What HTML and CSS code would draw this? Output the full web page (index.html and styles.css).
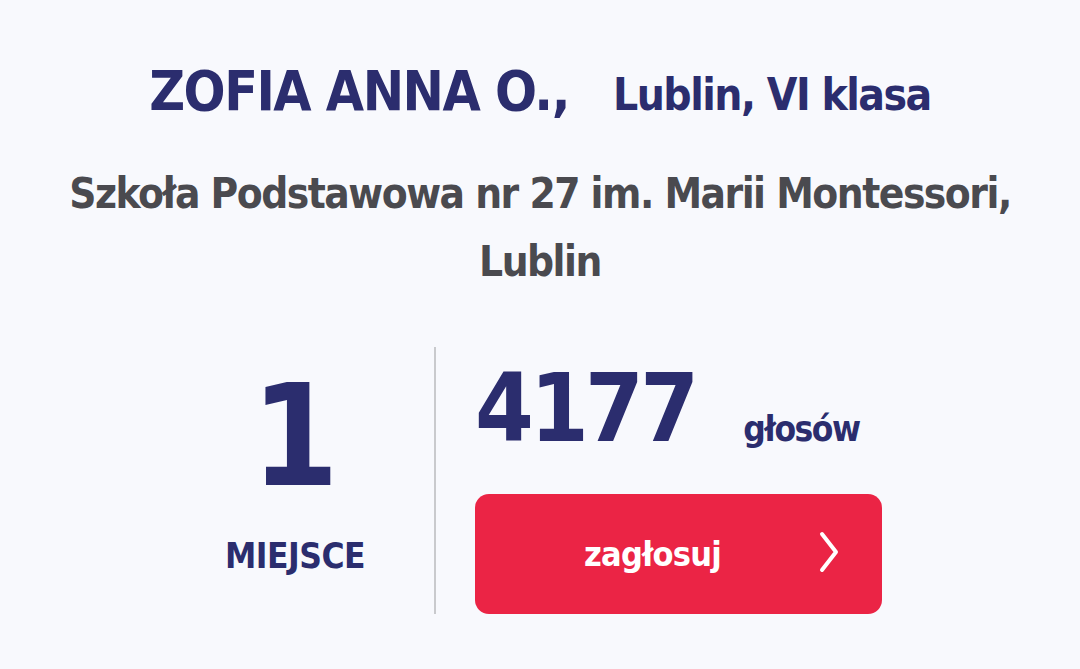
FILE: index.html
```html
<!DOCTYPE html>
<html lang="pl">
<head>
<meta charset="utf-8">
<link rel="stylesheet" href="styles.css">
</head>
<body>
<main class="card">
  <h1 class="title"><span class="name">ZOFIA ANNA O.,</span><span class="city">Lublin, VI klasa</span></h1>
  <p class="school">Szkoła Podstawowa nr 27 im. Marii Montessori,<br>Lublin</p>
  <section class="stats">
    <div class="place">
      <div class="place-num">1</div>
      <div class="place-label">MIEJSCE</div>
    </div>
    <div class="divider"></div>
    <div class="votes">
      <div class="votes-row"><span class="votes-num">4177</span><span class="votes-label">głosów</span></div>
      <button class="vote-btn"><span class="vote-text">zagłosuj</span>
        <svg class="chev" width="22" height="42" viewBox="0 0 22 42"><path d="M4 3 L18 21 L4 39" fill="none" stroke="#fff" stroke-width="4" stroke-linecap="round" stroke-linejoin="round"/></svg>
      </button>
    </div>
  </section>
</main>
</body>
</html>
```
FILE: styles.css
```css
html, body {
  margin: 0;
  padding: 0;
  background: #f8f9fd;
}
body {
  font-family: "DejaVu Sans Condensed", "Liberation Sans", sans-serif;
  width: 1080px;
  height: 669px;
  overflow: hidden;
}
.card {
  display: flex;
  flex-direction: column;
  align-items: center;
  padding-top: 64px;
}
.title {
  margin: 0;
  display: flex;
  align-items: baseline;
  gap: 44px;
  color: #2b2d6e;
  line-height: 1;
}
.name {
  font-size: 55px;
  font-weight: 700;
  letter-spacing: -1.5px;
}
.city {
  font-size: 44px;
  font-weight: 700;
  letter-spacing: -1.5px;
}
.school {
  margin: 41px 0 0;
  text-align: center;
  font-size: 42px;
  font-weight: 700;
  letter-spacing: -1.5px;
  line-height: 68px;
  color: #4a4a4f;
}
.stats {
  align-self: stretch;
  display: flex;
  padding-left: 156px;
  margin-top: 51px;
}
.place {
  width: 278px;
  display: flex;
  flex-direction: column;
  align-items: center;
  color: #2b2d6e;
  font-weight: 700;
}
.place-num {
  font-size: 140px;
  line-height: 1;
  margin-top: 20px;
  font-weight: 900;
}
.place-label {
  font-size: 35px;
  margin-top: 29px;
  letter-spacing: -0.5px;
}
.divider {
  width: 2px;
  height: 267px;
  background: #c9cacd;
}
.votes {
  padding-left: 39px;
  display: flex;
  flex-direction: column;
}
.votes-row {
  display: flex;
  align-items: baseline;
  gap: 48px;
  color: #2b2d6e;
  font-weight: 700;
  height: 147px;
}
.votes-num {
  font-size: 94px;
  line-height: 1;
  font-weight: 900;
  letter-spacing: -3.8px;
  margin-top: 15px;
}
.votes-label {
  font-size: 35px;
  letter-spacing: -1.5px;
}
.vote-btn {
  width: 407px;
  height: 120px;
  border: none;
  border-radius: 14px;
  background: #eb2445;
  color: #fff;
  font-family: inherit;
  font-weight: 700;
  font-size: 34px;
  letter-spacing: -0.8px;
  display: flex;
  align-items: center;
  justify-content: center;
  position: relative;
  padding: 0;
}
.vote-text {
  margin-right: 52px;
}
.chev {
  position: absolute;
  right: 42px;
  top: 37px;
}
```
